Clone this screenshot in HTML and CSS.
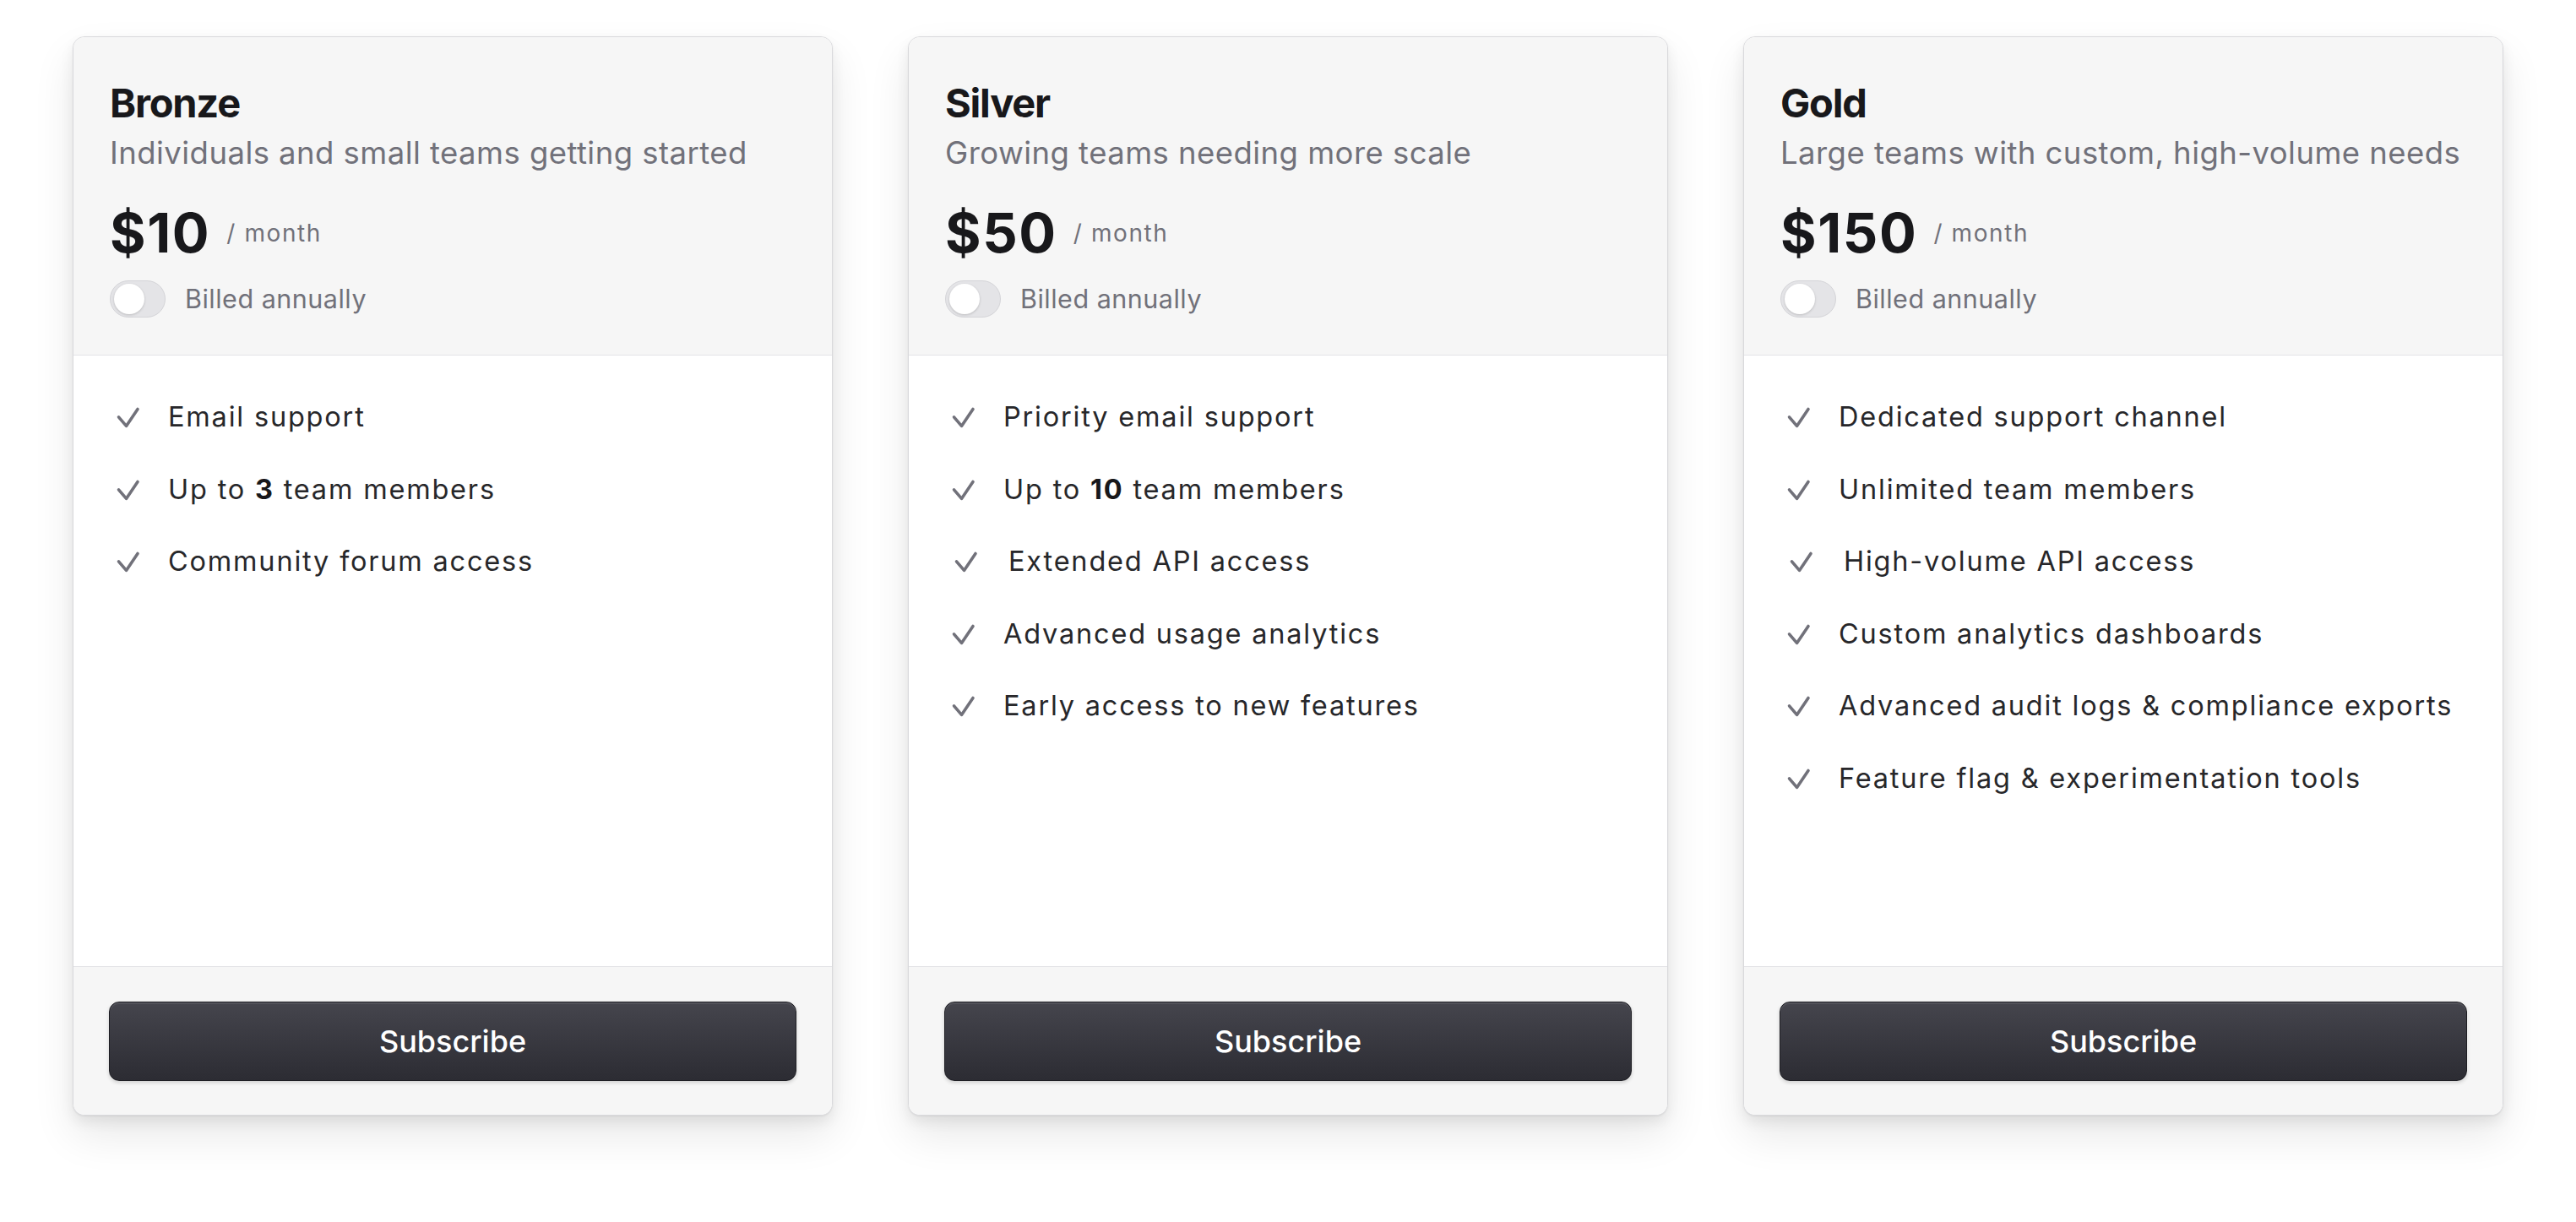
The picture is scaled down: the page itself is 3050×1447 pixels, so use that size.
FILE: index.html
```html
<!DOCTYPE html>
<html lang="en">
<head>
<meta charset="utf-8">
<title>Pricing</title>
<link rel="stylesheet" href="styles.css">
</head>
<body>
<main class="pricing">
  <section class="card">
    <header class="card__head">
      <h2 class="card__title">Bronze</h2>
      <p class="card__desc">Individuals and small teams getting started</p>
      <div class="price">
        <span class="price__amount">$10</span>
        <span class="price__period">/ month</span>
      </div>
      <label class="billing">
        <span class="toggle"><span class="toggle__knob"></span></span>
        <span class="billing__label">Billed annually</span>
      </label>
    </header>
    <ul class="features">
      <li class="feature"><svg class="check" viewBox="0 0 44 44"><polyline points="10.5,21.8 19.5,32.4 33,12.4"/></svg><span>Email support</span></li>
      <li class="feature"><svg class="check" viewBox="0 0 44 44"><polyline points="10.5,21.8 19.5,32.4 33,12.4"/></svg><span>Up to <b>3</b> team members</span></li>
      <li class="feature"><svg class="check" viewBox="0 0 44 44"><polyline points="10.5,21.8 19.5,32.4 33,12.4"/></svg><span>Community forum access</span></li>
    </ul>
    <footer class="card__foot">
      <button class="subscribe" type="button">Subscribe</button>
    </footer>
  </section>

  <section class="card">
    <header class="card__head">
      <h2 class="card__title">Silver</h2>
      <p class="card__desc">Growing teams needing more scale</p>
      <div class="price">
        <span class="price__amount">$50</span>
        <span class="price__period">/ month</span>
      </div>
      <label class="billing">
        <span class="toggle"><span class="toggle__knob"></span></span>
        <span class="billing__label">Billed annually</span>
      </label>
    </header>
    <ul class="features">
      <li class="feature"><svg class="check" viewBox="0 0 44 44"><polyline points="10.5,21.8 19.5,32.4 33,12.4"/></svg><span>Priority email support</span></li>
      <li class="feature"><svg class="check" viewBox="0 0 44 44"><polyline points="10.5,21.8 19.5,32.4 33,12.4"/></svg><span>Up to <b>10</b> team members</span></li>
      <li class="feature feature--shift"><svg class="check" viewBox="0 0 44 44"><polyline points="10.5,21.8 19.5,32.4 33,12.4"/></svg><span>Extended API access</span></li>
      <li class="feature"><svg class="check" viewBox="0 0 44 44"><polyline points="10.5,21.8 19.5,32.4 33,12.4"/></svg><span>Advanced usage analytics</span></li>
      <li class="feature"><svg class="check" viewBox="0 0 44 44"><polyline points="10.5,21.8 19.5,32.4 33,12.4"/></svg><span>Early access to new features</span></li>
    </ul>
    <footer class="card__foot">
      <button class="subscribe" type="button">Subscribe</button>
    </footer>
  </section>

  <section class="card">
    <header class="card__head">
      <h2 class="card__title">Gold</h2>
      <p class="card__desc">Large teams with custom, high-volume needs</p>
      <div class="price">
        <span class="price__amount">$150</span>
        <span class="price__period">/ month</span>
      </div>
      <label class="billing">
        <span class="toggle"><span class="toggle__knob"></span></span>
        <span class="billing__label">Billed annually</span>
      </label>
    </header>
    <ul class="features">
      <li class="feature"><svg class="check" viewBox="0 0 44 44"><polyline points="10.5,21.8 19.5,32.4 33,12.4"/></svg><span>Dedicated support channel</span></li>
      <li class="feature"><svg class="check" viewBox="0 0 44 44"><polyline points="10.5,21.8 19.5,32.4 33,12.4"/></svg><span>Unlimited team members</span></li>
      <li class="feature feature--shift"><svg class="check" viewBox="0 0 44 44"><polyline points="10.5,21.8 19.5,32.4 33,12.4"/></svg><span>High-volume API access</span></li>
      <li class="feature"><svg class="check" viewBox="0 0 44 44"><polyline points="10.5,21.8 19.5,32.4 33,12.4"/></svg><span>Custom analytics dashboards</span></li>
      <li class="feature"><svg class="check" viewBox="0 0 44 44"><polyline points="10.5,21.8 19.5,32.4 33,12.4"/></svg><span>Advanced audit logs &amp; compliance exports</span></li>
      <li class="feature"><svg class="check" viewBox="0 0 44 44"><polyline points="10.5,21.8 19.5,32.4 33,12.4"/></svg><span>Feature flag &amp; experimentation tools</span></li>
    </ul>
    <footer class="card__foot">
      <button class="subscribe" type="button">Subscribe</button>
    </footer>
  </section>
</main>
</body>
</html>
```

FILE: styles.css
```css
* { box-sizing: border-box; }

html, body {
  margin: 0;
  padding: 0;
  background: #ffffff;
}

body {
  min-height: 100vh;
  font-family: Inter, "Noto Sans", "Liberation Sans", sans-serif;
  color: #18181b;
  -webkit-font-smoothing: antialiased;
}

.pricing {
  display: flex;
  gap: 89px;
  padding: 43px 86px 126px;
}

.card {
  flex: 1 1 0;
  height: 1278px;
  display: flex;
  flex-direction: column;
  background: #ffffff;
  border: 1px solid #d9d9dc;
  border-radius: 14px;
  overflow: hidden;
  box-shadow:
    0 1px 2px rgba(0, 0, 0, 0.06),
    0 8px 16px rgba(0, 0, 0, 0.07),
    0 24px 50px rgba(0, 0, 0, 0.09);
}

.card__head {
  background: #f6f6f6;
  border-bottom: 1px solid #e4e4e7;
  padding: 50px 43px 44px;
}

.card__title {
  margin: 0;
  font-size: 47px;
  line-height: 56px;
  font-weight: 700;
  letter-spacing: -1.2px;
  color: #18181b;
}

.card__desc {
  margin: 7px 0 0;
  font-size: 36.5px;
  line-height: 48px;
  font-weight: 400;
  letter-spacing: 0.45px;
  color: #71717a;
}

.price {
  margin-top: 38px;
  display: flex;
  align-items: center;
  gap: 19px;
}

.price__amount {
  font-size: 65px;
  line-height: 65px;
  font-weight: 700;
  letter-spacing: 1.6px;
  color: #18181b;
}

.price__period {
  font-size: 28px;
  line-height: 28px;
  letter-spacing: 1.6px;
  color: #71717a;
}

.billing {
  margin-top: 24px;
  display: flex;
  align-items: center;
  gap: 23px;
}

.toggle {
  width: 66px;
  height: 44px;
  border-radius: 22px;
  background: #e4e4e7;
  border: 1px solid #d4d4d8;
  display: flex;
  align-items: center;
  padding-left: 4px;
}

.toggle__knob {
  width: 36px;
  height: 36px;
  border-radius: 50%;
  background: #ffffff;
  box-shadow: 0 1px 3px rgba(0, 0, 0, 0.18);
}

.billing__label {
  font-size: 30.5px;
  line-height: 44px;
  letter-spacing: 0.5px;
  color: #71717a;
}

.features {
  flex: 1 1 auto;
  list-style: none;
  margin: 0;
  padding: 49px 43px 0;
  display: flex;
  flex-direction: column;
  gap: 37.5px;
}

.feature {
  display: flex;
  align-items: center;
  gap: 25px;
  font-size: 32.5px;
  line-height: 48px;
  letter-spacing: 1.8px;
  color: #27272a;
}

.feature b {
  font-weight: 700;
  color: #18181b;
}

.feature--shift {
  padding-left: 3px;
  gap: 28px;
}

.check {
  width: 44px;
  height: 44px;
  flex: none;
}

.check polyline {
  fill: none;
  stroke: #71717a;
  stroke-width: 3.6;
  stroke-linecap: round;
  stroke-linejoin: round;
}

.card__foot {
  background: #f6f6f6;
  border-top: 1px solid #e4e4e7;
  padding: 41px 42px 40px;
}

.subscribe {
  display: block;
  width: 100%;
  height: 94px;
  border-radius: 12px;
  border: 1px solid #1f1f24;
  background: linear-gradient(#45454d, #2c2c33);
  box-shadow:
    inset 0 2px 0 rgba(255, 255, 255, 0.08),
    0 2px 4px rgba(0, 0, 0, 0.16);
  color: #ffffff;
  font-family: inherit;
  font-size: 36px;
  font-weight: 500;
  cursor: pointer;
}
```
